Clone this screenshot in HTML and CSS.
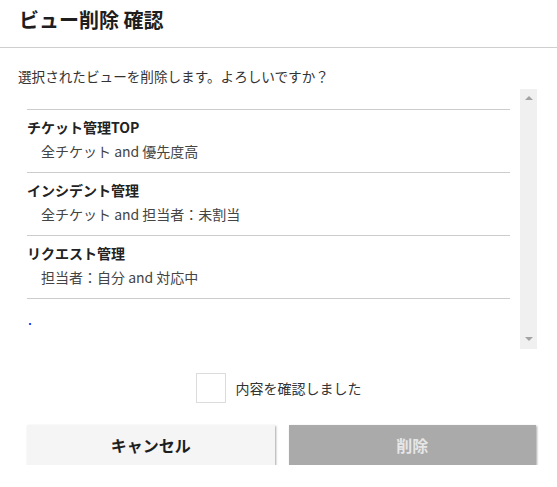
FILE: index.html
```html
<!DOCTYPE html>
<html lang="ja">
  <head>
    <meta charset="UTF-8">
    <meta name="viewport" content="width=device-width, initial-scale=1.0">
    <title>ビュー削除 確認</title>
    <link rel="stylesheet" href="styles.css">
  </head>
  <body>
    <div class="dialog">
      <header class="dialog-header">
        <h1>ビュー削除 確認</h1>
      </header>

      <div class="dialog-body">
        <p class="message">選択されたビューを削除します。よろしいですか？</p>

        <!-- selected views -->
        <div class="view-box">
          <div class="view-scroll">
            <ul class="view-list">
              <li class="view-item">
                <div class="view-name">チケット管理TOP</div>
                <div class="view-cond">全チケット and 優先度高</div>
              </li>
              <li class="view-item">
                <div class="view-name">インシデント管理</div>
                <div class="view-cond">全チケット and 担当者：未割当</div>
              </li>
              <li class="view-item">
                <div class="view-name">リクエスト管理</div>
                <div class="view-cond">担当者：自分 and 対応中</div>
              </li>
            </ul>
            <a class="view-more" href="#">.</a>
          </div>
          <div class="scrollbar">
            <span class="arrow arrow-up"></span>
            <span class="arrow arrow-down"></span>
          </div>
        </div>

        <label class="confirm">
          <input type="checkbox" id="confirmCheck">
          <span class="checkbox"></span>
          内容を確認しました
        </label>

        <div class="actions">
          <button class="btn btn-cancel" type="button">キャンセル</button>
          <button class="btn btn-delete" type="button" disabled>削除</button>
        </div>
      </div>
    </div>
  </body>
</html>
```

FILE: styles.css
```css
body {
  margin: 0;
  background-color: #fff;
  color: #333;
  font-family: "Noto Sans CJK JP", "Noto Sans", sans-serif;
  font-size: 14px;
}

.dialog {
  width: 557px;
}

.dialog-header {
  padding: 6px 19px 13px;
  border-bottom: 1px solid #cfcfcf;
}

.dialog-header h1 {
  margin: 0;
  font-size: 20px;
  line-height: 28px;
  font-weight: bold;
  color: #1e1e1e;
}

.dialog-body {
  padding: 0 20px 0 18px;
}

.message {
  margin: 18px 0 0;
  line-height: 20px;
  font-size: 13.6px;
  color: #333;
}

.view-box {
  display: flex;
  height: 260px;
  margin-top: 3px;
}

.view-scroll {
  flex: 1;
  padding: 20px 10px 0 9px;
}

.view-list {
  margin: 0;
  padding: 0;
  list-style: none;
  border-top: 1px solid #cccccc;
}

.view-item {
  padding: 7px 0 11px;
  border-bottom: 1px solid #cccccc;
}

.view-name {
  line-height: 20px;
  font-weight: bold;
  color: #222;
}

.view-cond {
  margin-top: 4px;
  padding-left: 14px;
  line-height: 20px;
  color: #444;
}

.view-more {
  display: block;
  padding: 10px 0 0 1px;
  line-height: 20px;
  color: #0000ee;
  text-decoration: none;
}

.scrollbar {
  width: 17px;
  background-color: #f0f0f0;
  display: flex;
  flex-direction: column;
  justify-content: space-between;
  align-items: center;
  padding: 7px 0 8px;
  box-sizing: border-box;
}

.arrow {
  width: 0;
  height: 0;
  border-left: 4px solid transparent;
  border-right: 4px solid transparent;
}

.arrow-up {
  border-bottom: 4px solid #a3a3a3;
}

.arrow-down {
  border-top: 4px solid #a3a3a3;
}

.confirm {
  display: flex;
  align-items: center;
  justify-content: center;
  gap: 10px;
  margin-top: 24px;
  padding-left: 2px;
  height: 30px;
  line-height: 20px;
  color: #333;
}

.confirm input {
  display: none;
}

.checkbox {
  width: 28px;
  height: 28px;
  border: 1px solid #dcdcdc;
  background-color: #fff;
}

.actions {
  display: flex;
  gap: 14px;
  margin-top: 22px;
  padding: 0 1px 0 9px;
}

.btn {
  flex: 1;
  height: 40px;
  border: none;
  font-family: inherit;
  font-size: 16px;
  font-weight: bold;
  box-shadow: 1px 1px 2px rgba(0, 0, 0, 0.35);
}

.btn-cancel {
  background-color: #f5f5f5;
  color: #1e1e1e;
}

.btn-delete {
  background-color: #aaaaaa;
  color: #e6e6e6;
}
```
